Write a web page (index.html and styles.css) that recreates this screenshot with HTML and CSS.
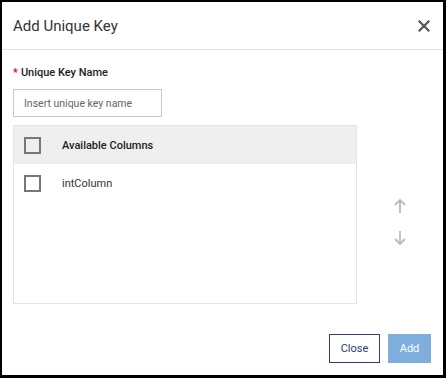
FILE: index.html
```html
<!DOCTYPE html>
<html lang="en">
<head>
    <meta charset="UTF-8">
    <meta name="viewport" content="width=device-width, initial-scale=1.0">
    <title>Add Unique Key</title>
    <link rel="stylesheet" href="styles.css">
</head>
<body>
    <div class="dialog">
        <div class="dialog-header">
            <h1>Add Unique Key</h1>
            <button class="close-x" aria-label="Close">
                <svg width="12" height="12" viewBox="0 0 12 12">
                    <path d="M1.5 1.5 L10.5 10.5 M10.5 1.5 L1.5 10.5" stroke="#555" stroke-width="2.2" stroke-linecap="square"/>
                </svg>
            </button>
        </div>

        <div class="dialog-body">
            <label class="field-label" for="keyName"><span class="required">*</span>Unique Key Name</label>
            <input type="text" id="keyName" class="key-input" placeholder="Insert unique key name">

            <div class="columns-area">
                <div class="column-list">
                    <div class="list-row list-head">
                        <span class="checkbox"></span>
                        <span class="head-text">Available Columns</span>
                    </div>
                    <div class="list-row">
                        <span class="checkbox"></span>
                        <span>intColumn</span>
                    </div>
                </div>
                <div class="order-buttons">
                    <svg width="12" height="16" viewBox="0 0 12 16">
                        <path d="M6 15 V2 M1 7 L6 2 L11 7" fill="none" stroke="#bbb" stroke-width="1.8"/>
                    </svg>
                    <svg width="12" height="16" viewBox="0 0 12 16">
                        <path d="M6 1 V14 M1 9 L6 14 L11 9" fill="none" stroke="#bbb" stroke-width="1.8"/>
                    </svg>
                </div>
            </div>
        </div>

        <div class="dialog-footer">
            <button class="btn btn-outline">Close</button>
            <button class="btn btn-primary" disabled>Add</button>
        </div>
    </div>
</body>
</html>
```

FILE: styles.css
```css
* {
    box-sizing: border-box;
}

body {
    margin: 0;
    padding: 0;
    font-family: Roboto, "Liberation Sans", Arial, sans-serif;
    background-color: #fff;
}

.dialog {
    width: 446px;
    height: 378px;
    border-style: solid;
    border-color: #000;
    border-width: 2px 3px 3px 2px;
    background-color: #fff;
    display: flex;
    flex-direction: column;
}

.dialog-header {
    height: 48px;
    padding: 0 12px 0 11px;
    display: flex;
    align-items: center;
    justify-content: space-between;
    border-bottom: 1px solid #e2e2e2;
}

.dialog-header h1 {
    margin: 0;
    font-size: 15px;
    font-weight: 400;
    color: #333;
}

.close-x {
    border: none;
    background: none;
    padding: 0;
    width: 14px;
    height: 14px;
    display: flex;
    align-items: center;
    justify-content: center;
    cursor: pointer;
}

.dialog-body {
    padding: 15px 0 0 11px;
    display: flex;
    flex-direction: column;
}

.field-label {
    font-size: 11px;
    line-height: 16px;
    font-weight: 500;
    color: #222;
}

.required {
    color: #d0021b;
    margin-right: 3px;
}

.key-input {
    margin-top: 8px;
    width: 149px;
    height: 28px;
    padding: 0 10px;
    border: 1px solid #c8c8c8;
    font-family: inherit;
    font-size: 10.5px;
    color: #333;
}

.key-input::placeholder {
    color: #666;
}

.columns-area {
    margin-top: 8px;
    display: flex;
}

.column-list {
    width: 344px;
    height: 179px;
    border: 1px solid #e4e4e4;
}

.list-row {
    height: 39px;
    display: flex;
    align-items: center;
    padding-left: 10px;
    font-size: 11px;
    color: #333;
}

.list-head {
    background-color: #efefef;
    height: 38px;
}

.head-text {
    font-weight: 500;
    color: #222;
}

.checkbox {
    width: 17px;
    height: 17px;
    border: 2px solid #777;
    background-color: transparent;
    margin-right: 21px;
}

.order-buttons {
    flex: 1;
    display: flex;
    flex-direction: column;
    align-items: center;
    justify-content: center;
    gap: 16px;
    padding-top: 14px;
}

.dialog-footer {
    margin-top: auto;
    padding: 0 12px 12px 0;
    display: flex;
    justify-content: flex-end;
    gap: 8px;
}

.btn {
    height: 29px;
    font-family: inherit;
    font-size: 11px;
    padding: 0 10px;
    cursor: pointer;
}

.btn-outline {
    background-color: #fff;
    border: 1px solid #2e3d6c;
    color: #2e3d6c;
    width: 51px;
}

.btn-primary {
    background-color: #7daedc;
    border: 1px solid #7daedc;
    color: #fff;
    width: 43px;
}
```
